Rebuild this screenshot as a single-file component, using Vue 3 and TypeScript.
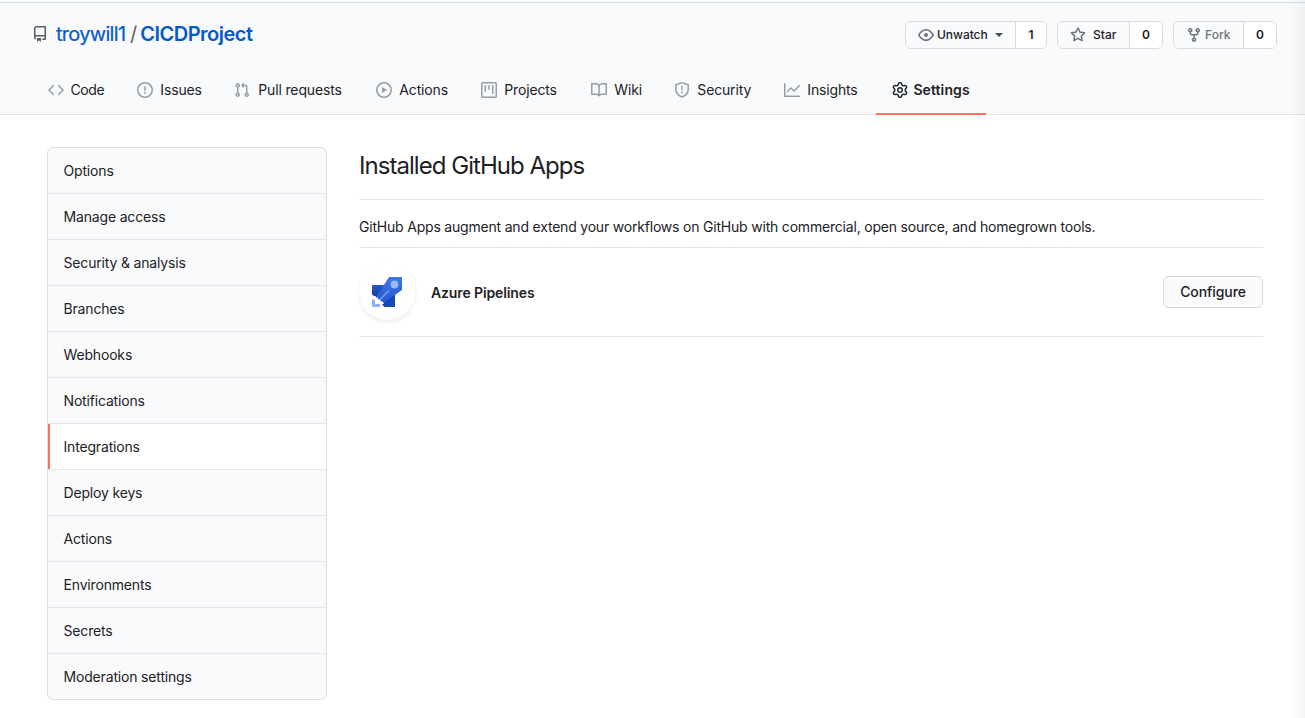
<script setup lang="ts">
interface Tab {
  label: string
  icon: string
  active?: boolean
}

const tabs: Tab[] = [
  { label: 'Code', icon: 'M4.72 3.22a.75.75 0 011.06 1.06L2.06 8l3.72 3.72a.75.75 0 11-1.06 1.06L.47 8.53a.75.75 0 010-1.06l4.25-4.25zm6.56 0a.75.75 0 10-1.06 1.06L13.94 8l-3.72 3.72a.75.75 0 101.06 1.06l4.25-4.25a.75.75 0 000-1.06l-4.25-4.25z' },
  { label: 'Issues', icon: 'M8 1.5a6.5 6.5 0 100 13 6.5 6.5 0 000-13zM0 8a8 8 0 1116 0A8 8 0 010 8zm9 3a1 1 0 11-2 0 1 1 0 012 0zm-.25-6.25a.75.75 0 00-1.5 0v3.5a.75.75 0 001.5 0v-3.5z' },
  { label: 'Pull requests', icon: 'M7.177 3.073L9.573.677A.25.25 0 0110 .854v4.792a.25.25 0 01-.427.177L7.177 3.427a.25.25 0 010-.354zM3.75 2.5a.75.75 0 100 1.5.75.75 0 000-1.5zm-2.25.75a2.25 2.25 0 113 2.122v5.256a2.251 2.251 0 11-1.5 0V5.372A2.25 2.25 0 011.5 3.25zM11 2.5h-1V4h1a1 1 0 011 1v5.628a2.251 2.251 0 101.5 0V5A2.5 2.5 0 0011 2.5zm1 10.25a.75.75 0 111.5 0 .75.75 0 01-1.5 0zM3.75 12a.75.75 0 100 1.5.75.75 0 000-1.5z' },
  { label: 'Actions', icon: 'M1.5 8a6.5 6.5 0 1113 0 6.5 6.5 0 01-13 0zM8 0a8 8 0 100 16A8 8 0 008 0zM6.379 5.227A.25.25 0 006 5.442v5.117a.25.25 0 00.379.214l4.264-2.559a.25.25 0 000-.428L6.379 5.227z' },
  { label: 'Projects', icon: 'M1.75 0A1.75 1.75 0 000 1.75v12.5C0 15.216.784 16 1.75 16h12.5A1.75 1.75 0 0016 14.25V1.75A1.75 1.75 0 0014.25 0H1.75zM1.5 1.75a.25.25 0 01.25-.25h12.5a.25.25 0 01.25.25v12.5a.25.25 0 01-.25.25H1.75a.25.25 0 01-.25-.25V1.75zM11.75 3a.75.75 0 00-.75.75v7.5a.75.75 0 001.5 0v-7.5a.75.75 0 00-.75-.75zm-8.25.75a.75.75 0 011.5 0v5.5a.75.75 0 01-1.5 0v-5.5zM8 3a.75.75 0 00-.75.75v3.5a.75.75 0 001.5 0v-3.5A.75.75 0 008 3z' },
  { label: 'Wiki', icon: 'M0 1.75A.75.75 0 01.75 1h4.253c1.227 0 2.317.59 3 1.501A3.744 3.744 0 0111.006 1h4.245a.75.75 0 01.75.75v10.5a.75.75 0 01-.75.75h-4.507a2.25 2.25 0 00-1.591.659l-.622.621a.75.75 0 01-1.06 0l-.622-.621A2.25 2.25 0 005.258 13H.75a.75.75 0 01-.75-.75V1.75zm8.755 3a2.25 2.25 0 012.25-2.25H14.5v9h-3.757c-.71 0-1.4.201-1.992.572l.004-7.322zm-1.504 7.324l.004-5.073-.002-2.253A2.25 2.25 0 005.003 2.5H1.5v9h3.757a3.75 3.75 0 011.994.574z' },
  { label: 'Security', icon: 'M7.467.133a1.75 1.75 0 011.066 0l5.25 1.68A1.75 1.75 0 0115 3.48V7c0 1.566-.32 3.182-1.303 4.682-.983 1.498-2.585 2.813-5.032 3.855a1.7 1.7 0 01-1.33 0c-2.447-1.042-4.049-2.357-5.032-3.855C1.32 10.182 1 8.566 1 7V3.48a1.75 1.75 0 011.217-1.667l5.25-1.68zm.61 1.429a.25.25 0 00-.153 0l-5.25 1.68a.25.25 0 00-.174.238V7c0 1.358.275 2.666 1.057 3.86.784 1.194 2.121 2.34 4.366 3.297a.2.2 0 00.154 0c2.245-.956 3.582-2.104 4.366-3.298C13.225 9.666 13.5 8.36 13.5 7V3.48a.25.25 0 00-.174-.237l-5.25-1.68zM9 10.5a1 1 0 11-2 0 1 1 0 012 0zm-.25-5.75a.75.75 0 10-1.5 0v3a.75.75 0 001.5 0v-3z' },
  { label: 'Insights', icon: 'M1.5 1.75a.75.75 0 00-1.5 0v12.5c0 .414.336.75.75.75h14.5a.75.75 0 000-1.5H1.5V1.75zm14.28 2.53a.75.75 0 00-1.06-1.06L10 7.94 7.53 5.47a.75.75 0 00-1.06 0L3.22 8.72a.75.75 0 001.06 1.06L7 7.06l2.47 2.47a.75.75 0 001.06 0l5.25-5.25z' },
  { label: 'Settings', active: true, icon: 'M7.429 1.525a6.593 6.593 0 011.142 0c.036.003.108.036.137.146l.289 1.105c.147.56.55.967.997 1.189.174.086.341.183.501.29.417.278.97.423 1.53.27l1.102-.303c.11-.03.175.016.195.046.219.31.41.641.573.989.014.031.022.11-.059.19l-.815.806c-.411.406-.562.957-.53 1.456a4.588 4.588 0 010 .582c-.032.499.119 1.05.53 1.456l.815.806c.08.08.073.159.059.19a6.494 6.494 0 01-.573.99c-.02.029-.086.074-.195.045l-1.103-.303c-.559-.153-1.112-.008-1.529.27-.16.107-.327.204-.5.29-.449.222-.851.628-.998 1.189l-.289 1.105c-.029.11-.101.143-.137.146a6.613 6.613 0 01-1.142 0c-.036-.003-.108-.037-.137-.146l-.289-1.105c-.147-.56-.55-.967-.997-1.189a4.502 4.502 0 01-.501-.29c-.417-.278-.97-.423-1.53-.27l-1.102.303c-.11.03-.175-.016-.195-.046a6.492 6.492 0 01-.573-.989c-.014-.031-.022-.11.059-.19l.815-.806c.411-.406.562-.957.53-1.456a4.587 4.587 0 010-.582c.032-.499-.119-1.05-.53-1.456l-.815-.806c-.08-.08-.073-.159-.059-.19a6.44 6.44 0 01.573-.99c.02-.029.086-.075.195-.045l1.103.303c.559.153 1.112.008 1.529-.27.16-.107.327-.204.5-.29.449-.222.851-.628.998-1.189l.289-1.105c.029-.11.101-.143.137-.146zM8 0c-.236 0-.47.01-.701.03-.743.065-1.29.615-1.458 1.261l-.29 1.106c-.017.066-.078.158-.211.224a5.994 5.994 0 00-.668.386c-.123.082-.233.09-.3.071L3.27 2.776c-.644-.177-1.392.02-1.82.63a7.977 7.977 0 00-.704 1.217c-.315.675-.111 1.422.363 1.891l.815.806c.05.048.098.147.088.294a6.084 6.084 0 000 .772c.01.147-.038.246-.088.294l-.815.806c-.474.469-.678 1.216-.363 1.891.2.428.436.835.704 1.218.428.609 1.176.806 1.82.63l1.103-.303c.066-.019.176-.011.299.071.213.143.436.272.668.386.133.066.194.158.212.224l.289 1.106c.169.646.715 1.196 1.458 1.26a8.094 8.094 0 001.402 0c.743-.064 1.29-.614 1.458-1.26l.29-1.106c.017-.066.078-.158.211-.224a5.98 5.98 0 00.668-.386c.123-.082.233-.09.3-.071l1.102.302c.644.177 1.392-.02 1.82-.63.268-.382.505-.789.704-1.217.315-.675.111-1.422-.364-1.891l-.814-.806c-.05-.048-.098-.147-.088-.294a6.1 6.1 0 000-.772c-.01-.147.039-.246.088-.294l.814-.806c.475-.469.679-1.216.364-1.891a7.992 7.992 0 00-.704-1.218c-.428-.609-1.176-.806-1.82-.63l-1.103.303c-.066.019-.176.011-.299-.071a5.991 5.991 0 00-.668-.386c-.133-.066-.194-.158-.212-.224L10.16 1.29C9.99.645 9.444.095 8.701.031A8.094 8.094 0 008 0zm1.5 8a1.5 1.5 0 11-3 0 1.5 1.5 0 013 0zM11 8a3 3 0 11-6 0 3 3 0 016 0z' },
]

const menu: string[] = [
  'Options', 'Manage access', 'Security & analysis', 'Branches', 'Webhooks', 'Notifications',
  'Integrations', 'Deploy keys', 'Actions', 'Environments', 'Secrets', 'Moderation settings',
]
</script>

<template>
  <div class="page">
    <header class="head">
      <div class="title-row">
        <h1 class="repo">
          <svg class="repo-icon" viewBox="0 0 16 16"><path fill-rule="evenodd" d="M2 2.5A2.5 2.5 0 014.5 0h8.75a.75.75 0 01.75.75v12.5a.75.75 0 01-.75.75h-2.5a.75.75 0 110-1.5h1.75v-2h-8a1 1 0 00-.714 1.7.75.75 0 01-1.072 1.05A2.495 2.495 0 012 11.5v-9zm10.5-1V9h-8c-.356 0-.694.074-1 .208V2.5a1 1 0 011-1h8zM5 12.25v3.25a.25.25 0 00.4.2l1.45-1.087a.25.25 0 01.3 0L8.6 15.7a.25.25 0 00.4-.2v-3.25a.25.25 0 00-.25-.25h-3.5a.25.25 0 00-.25.25z" /></svg>
          <a class="owner">troywill1</a>
          <span class="slash">/</span>
          <a class="name">CICDProject</a>
        </h1>
        <div class="social">
          <div class="pair watch">
            <button class="act">
              <svg viewBox="0 0 16 16"><path fill-rule="evenodd" d="M1.679 7.932c.412-.621 1.242-1.75 2.366-2.717C5.175 4.242 6.527 3.5 8 3.5c1.473 0 2.824.742 3.955 1.715 1.124.967 1.954 2.096 2.366 2.717a.119.119 0 010 .136c-.412.621-1.242 1.75-2.366 2.717C10.825 11.758 9.473 12.5 8 12.5c-1.473 0-2.824-.742-3.955-1.715C2.92 9.818 2.09 8.69 1.679 8.068a.119.119 0 010-.136zM8 2c-1.981 0-3.67.992-4.933 2.078C1.797 5.169.88 6.423.43 7.1a1.619 1.619 0 000 1.798c.45.678 1.367 1.932 2.637 3.024C4.329 13.008 6.019 14 8 14c1.981 0 3.67-.992 4.933-2.078 1.27-1.091 2.187-2.345 2.637-3.023a1.619 1.619 0 000-1.798c-.45-.678-1.367-1.932-2.637-3.023C11.671 2.992 9.981 2 8 2zm0 8a2 2 0 100-4 2 2 0 000 4z" /></svg>
              <span>Unwatch</span><i class="caret"></i>
            </button>
            <a class="count">1</a>
          </div>
          <div class="pair star">
            <button class="act">
              <svg viewBox="0 0 16 16"><path fill-rule="evenodd" d="M8 .25a.75.75 0 01.673.418l1.882 3.815 4.21.612a.75.75 0 01.416 1.279l-3.046 2.97.719 4.192a.75.75 0 01-1.088.791L8 12.347l-3.766 1.98a.75.75 0 01-1.088-.79l.72-4.194L.818 6.374a.75.75 0 01.416-1.28l4.21-.611L7.327.668A.75.75 0 018 .25zm0 2.445L6.615 5.5a.75.75 0 01-.564.41l-3.097.45 2.24 2.184a.75.75 0 01.216.664l-.528 3.084 2.769-1.456a.75.75 0 01.698 0l2.77 1.456-.53-3.084a.75.75 0 01.216-.664l2.24-2.183-3.096-.45a.75.75 0 01-.564-.41L8 2.694v.001z" /></svg>
              <span>Star</span>
            </button>
            <a class="count">0</a>
          </div>
          <div class="pair fork">
            <button class="act">
              <svg viewBox="0 0 16 16"><path fill-rule="evenodd" d="M5 3.25a.75.75 0 11-1.5 0 .75.75 0 011.5 0zm0 2.122a2.25 2.25 0 10-1.5 0v.878A2.25 2.25 0 005.75 8.5h1.5v2.128a2.251 2.251 0 101.5 0V8.5h1.5a2.25 2.25 0 002.25-2.25v-.878a2.25 2.25 0 10-1.5 0v.878a.75.75 0 01-.75.75h-4.5A.75.75 0 015 6.25v-.878zm3.75 7.378a.75.75 0 11-1.5 0 .75.75 0 011.5 0zm3-8.75a.75.75 0 100-1.5.75.75 0 000 1.5z" /></svg>
              <span>Fork</span>
            </button>
            <a class="count">0</a>
          </div>
        </div>
      </div>
      <nav class="tabs">
        <a v-for="t in tabs" :key="t.label" class="tab" :class="[{ active: t.active }, t.label.toLowerCase().replace(' ', '-')]">
          <svg viewBox="0 0 16 16"><path fill-rule="evenodd" :d="t.icon" /></svg>
          <span>{{ t.label }}</span>
        </a>
      </nav>
    </header>

    <div class="body">
      <nav class="menu">
        <a v-for="m in menu" :key="m" class="item" :class="{ current: m === 'Integrations' }"><span>{{ m }}</span></a>
      </nav>
      <main class="main">
        <h2>Installed GitHub Apps</h2>
        <p><span>GitHub Apps augment and extend your workflows on GitHub with commercial, open source, and homegrown tools.</span></p>
        <div class="app-row">
          <div class="avatar">
            <svg viewBox="0 0 31 31">
              <defs>
                <linearGradient id="wing" x1="0" y1="0" x2="0" y2="1"><stop offset="0" stop-color="#2359c7" /><stop offset="1" stop-color="#173b9b" /></linearGradient>
                <linearGradient id="hull" x1="0" y1="0" x2="0" y2="1"><stop offset="0" stop-color="#4076e6" /><stop offset="1" stop-color="#2458cf" /></linearGradient>
              </defs>
              <path fill="url(#wing)" d="M0 8h14L8.500 19H6L4.500 21 3.500 19H2L0 17.500z" />
              <path fill="#1746b5" d="M11.500 24L23 15V30H12.500L10 27.500l2-1z" />
              <path fill="url(#hull)" d="M17 0H30V13L11.500 26 10 24l-1.500.5L8 22l-2.500.5L6 20.500 4.500 19.500z" />
              <circle cx="22.500" cy="7.500" r="3.900" fill="#9cb8f3" />
              <path d="M8 22.500L17 13.500" stroke="#6e9af0" stroke-width="1.700" />
              <path fill="#8fb0f6" d="M0 22.500h3v4.500h5V30H0z" />
            </svg>
          </div>
          <strong>Azure Pipelines</strong>
          <button class="configure">Configure</button>
        </div>
      </main>
    </div>
    <div class="edge"></div>
  </div>
</template>

<style>
body { margin: 0; background: #fff; }
</style>

<style scoped>
* { box-sizing: border-box; }
.page { position: relative; width: 1305px; height: 718px; overflow: hidden; background: #fff; color: #1d2125; font: 14px/20px Inter, "Liberation Sans", sans-serif; }
a, span { white-space: nowrap; }
.head { height: 115px; padding-top: 2px; background: #f9fafc; border-bottom: 1px solid #e1e4e8; }
.title-row { display: flex; justify-content: space-between; height: 64px; padding: 18px 28px 0 32px; border-top: 1px solid #d8dce5; }
.repo { display: flex; align-items: center; margin: 0; height: 26px; font-size: 20px; font-weight: 400; }
.repo-icon { width: 16px; height: 16px; margin-right: 8px; fill: #586069; }
.repo a { color: #0559cb; }
.owner { width: 70px; letter-spacing: -0.7px; -webkit-text-stroke: 0.2px #0559cb; }
.slash { margin: 0 3px 0 4px; color: #586069; }
.name { font-weight: 600; letter-spacing: -0.5px; }
.social { display: flex; gap: 10px; }
.pair { display: flex; height: 28px; border: 1px solid #d7dade; border-radius: 6px; overflow: hidden; font-size: 12px; }
.act { display: flex; align-items: center; flex: 1; padding: 0 0 0 12px; border: 0; background: #f9fafc; color: #1d2125; font: 500 12px/20px Inter, sans-serif; }
.act svg { width: 16px; height: 16px; fill: #6a737d; }
.caret { margin-left: 7px; border: 4px solid transparent; border-top-color: #444d56; border-bottom: 0; }
.count { display: flex; align-items: center; justify-content: center; border-left: 1px solid #d7dade; background: #fff; font-weight: 600; }
.watch { width: 142px; }
.watch svg { margin-right: 3px; }
.watch span { letter-spacing: -0.05px; }
.watch .count { width: 31px; }
.star { width: 106px; }
.star svg { margin-right: 7px; }
.fork { width: 104px; }
.fork svg { margin-right: 3px; }
.star .count, .fork .count { width: 33px; }
.fork .act { color: #6a737d; }
.tabs { display: grid; grid-template-columns: 89px 97px 142px 105px 110px 83px 110px 108px 110px; height: 49px; padding-left: 32px; }
.tab { display: flex; align-items: center; height: 49px; padding: 0 0 2px 16px; letter-spacing: -0.15px; }
.tab svg { width: 16px; height: 16px; margin-right: 7.300px; flex: none; fill: #959da5; }
.tab.code { letter-spacing: -0.4px; }
.tab.code svg { margin-right: 6.500px; }
.tab.pull-requests svg { margin-right: 8.300px; }
.tab.active { padding-bottom: 0; border-bottom: 2px solid #f9705e; font-weight: 600; letter-spacing: 0.1px; }
.tab.active svg { margin-right: 5.400px; fill: #24292e; }
.body { display: flex; padding: 32px 42px 0 47px; }
.menu { width: 280px; height: 553px; border: 1px solid #dcdfe4; border-radius: 6px; overflow: hidden; background: #f9fafc; letter-spacing: -0.17px; }
.item { display: flex; align-items: center; height: 46px; padding: 1px 0 0 15.500px; border-bottom: 1px solid #e4e7eb; }
.item:last-child { height: 45px; border-bottom: 0; }
.item.current { background: #fff; box-shadow: inset 2px 0 #f9705e; }
.main { width: 904px; margin-left: 32px; }
h2 { height: 53px; margin: 0; padding-top: 3px; border-bottom: 1px solid #e4e6ea; font-size: 24px; line-height: 32px; font-weight: 400; letter-spacing: -0.96px; }
p { height: 48px; margin: 0; padding-top: 17px; border-bottom: 1px solid #e4e6ea; letter-spacing: -0.2px; }
.app-row { display: flex; align-items: center; height: 89px; border-bottom: 1px solid #e4e6ea; }
.avatar { display: grid; place-items: center; width: 56px; height: 56px; margin-right: 16px; border-radius: 50%; box-shadow: 0 2px 5px #00000014; }
.avatar svg { width: 31px; height: 31px; }
strong { padding-top: 2px; font-weight: 600; letter-spacing: -0.12px; }
.configure { width: 100px; height: 32px; margin-left: auto; padding: 0; border: 1px solid #d7dade; border-radius: 6px; background: #f9fafc; color: #1d2125; font: 500 14px/20px Inter, sans-serif; letter-spacing: -0.1px; }
.edge { position: absolute; top: 0; right: 0; width: 16px; height: 718px; background: linear-gradient(to right, #0000, #0000000a); }
</style>
